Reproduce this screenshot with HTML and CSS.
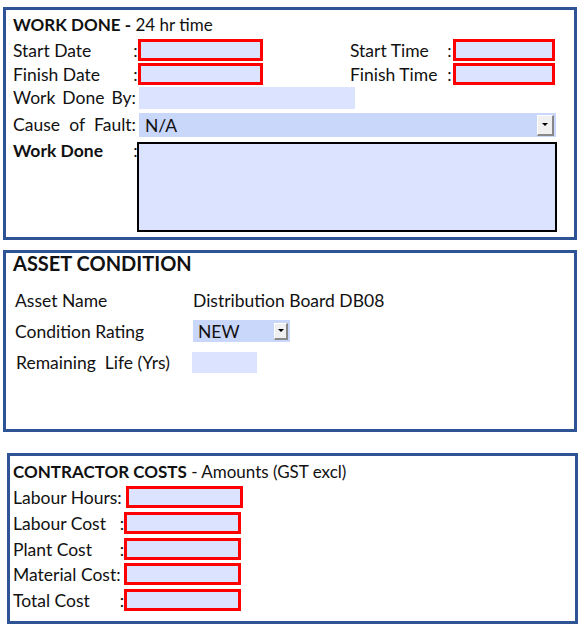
FILE: index.html
```html
<!DOCTYPE html>
<html lang="en">
<head>
    <meta charset="UTF-8">
    <title>Work Order Completion</title>
    <link rel="stylesheet" href="styles.css">
</head>
<body>
<!-- Work done -->
<section class="panel panel-work">
    <div class="heading"><b>WORK DONE -</b> 24 hr time</div>
    <div class="row row-date">
        <span class="lbl lbl-date">Start Date</span><span class="colon">:</span>
        <span class="field req f-date"></span>
        <span class="lbl lbl-time">Start Time</span><span class="colon">:</span>
        <span class="field req f-time"></span>
    </div>
    <div class="row row-date">
        <span class="lbl lbl-date">Finish Date</span><span class="colon">:</span>
        <span class="field req f-date"></span>
        <span class="lbl lbl-time">Finish Time</span><span class="colon">:</span>
        <span class="field req f-time"></span>
    </div>
    <div class="row row-by">
        <span class="lbl lbl-just">Work Done By:</span>
        <span class="field f-by"></span>
    </div>
    <div class="row row-cause">
        <span class="lbl lbl-just">Cause of Fault:</span>
        <span class="combo f-cause">N/A<span class="drop"></span></span>
    </div>
    <div class="row row-done">
        <span class="lbl lbl-date"><b>Work Done</b></span><span class="colon">:</span>
        <span class="field f-done"></span>
    </div>
</section>

<!-- Asset condition -->
<section class="panel panel-asset">
    <div class="title">ASSET CONDITION</div>
    <div class="arow a-name">
        <span class="alb">Asset Name</span>
        <span>Distribution Board DB08</span>
    </div>
    <div class="arow a-cond">
        <span class="alb">Condition Rating</span>
        <span class="combo f-rating">NEW<span class="drop"></span></span>
    </div>
    <div class="arow a-life">
        <span class="alb">Remaining&nbsp; Life (Yrs)</span>
        <span class="field f-life"></span>
    </div>
</section>

<!-- Contractor costs -->
<section class="panel panel-cost">
    <div class="heading"><b>CONTRACTOR COSTS</b> - Amounts (GST excl)</div>
    <div class="crow c-hours"><span class="clb">Labour Hours:</span><span class="field req f-cost"></span></div>
    <div class="crow"><span class="clb">Labour Cost<span>:</span></span><span class="field req f-cost"></span></div>
    <div class="crow c-plant"><span class="clb">Plant Cost<span>:</span></span><span class="field req f-cost"></span></div>
    <div class="crow"><span class="clb">Material Cost:</span><span class="field req f-cost"></span></div>
    <div class="crow"><span class="clb">Total Cost<span>:</span></span><span class="field req f-cost"></span></div>
</section>
</body>
</html>
```

FILE: styles.css
```css
body {
    margin: 0;
    width: 586px;
    height: 630px;
    background: #fff;
    font-family: Lato, "Open Sans", sans-serif;
    font-size: 17.5px;
    color: #111;
    overflow: hidden;
}

.panel {
    box-sizing: border-box;
    border: 3px solid #2f5496;
}

.panel-work {
    margin: 7px 0 0 3px;
    width: 574px;
    height: 233px;
    padding: 2px 0 0 7px;
}

.panel-asset {
    margin: 10px 0 0 3px;
    width: 574px;
    height: 182px;
    padding: 0 0 0 7px;
}

.panel-cost {
    margin: 21px 0 0 7px;
    width: 571px;
    height: 171px;
    padding: 3px 0 0 3px;
}

.heading {
    height: 27px;
    line-height: 26px;
    font-size: 17px;
}

.row {
    display: flex;
    align-items: center;
    height: 22px;
    margin-bottom: 2px;
}

.row-by { margin-top: 2px; }
.row-cause { height: 24px; margin: 4px 0 5px; }
.row-done { height: 90px; align-items: flex-start; }

.lbl {
    white-space: nowrap;
}

.lbl-date { width: 120px; }
.lbl-time { width: 97px; margin-left: 87px; }

.lbl-just {
    width: 123px;
    text-align: justify;
    text-align-last: justify;
    white-space: normal;
    height: 22px;
    overflow: hidden;
}

.colon {
    width: 5px;
    text-align: center;
}

.row-done .lbl, .row-done .colon { line-height: 17px; }

.field {
    display: block;
    box-sizing: border-box;
    height: 22px;
    background: #dce3fe;
}

.req { border: 3px solid #f00; }

.f-date { width: 125px; }
.f-time { width: 102px; margin-left: 1px; }
.f-by { width: 216px; margin-left: 3px; }
.f-done {
    width: 420px;
    height: 90px;
    margin-left: -1px;
    border: 2px solid #000;
}

.combo {
    display: flex;
    align-items: center;
    box-sizing: border-box;
    background: #c9d7fb;
    padding-left: 6px;
}

.f-cause { width: 417px; height: 24px; margin-left: 3px; }

.drop {
    box-sizing: border-box;
    margin-left: auto;
    margin-right: 2px;
    width: 17px;
    height: 21px;
    background: #f0f0f0;
    border-top: 1px solid #fff;
    border-left: 1px solid #fff;
    border-right: 2px solid #888;
    border-bottom: 2px solid #888;
    display: flex;
    align-items: center;
    justify-content: center;
}

.drop::after {
    content: "";
    border-left: 3px solid transparent;
    border-right: 3px solid transparent;
    border-top: 3px solid #000;
}

.title {
    font-weight: bold;
    font-size: 20px;
    height: 32px;
    line-height: 21px;
}

.arow {
    display: flex;
    align-items: center;
    height: 22px;
}

.alb { width: 180px; padding-left: 2px; box-sizing: border-box; }
.a-name { margin-top: 4px; margin-bottom: 9px; }
.a-cond { margin-bottom: 9px; }
.a-life .alb { padding-left: 3px; width: 179px; }

.f-rating { width: 97px; height: 22px; padding-left: 5px; }
.f-rating .drop { width: 14px; height: 17px; }
.f-life { width: 65px; height: 21px; }

.crow {
    display: flex;
    align-items: center;
    height: 22px;
    margin-bottom: 4px;
}

.clb {
    width: 111px;
    display: flex;
    justify-content: space-between;
    white-space: nowrap;
}

.c-hours .clb { width: 113px; }
.c-plant { margin-bottom: 3px; }

.f-cost { width: 117px; }
```
